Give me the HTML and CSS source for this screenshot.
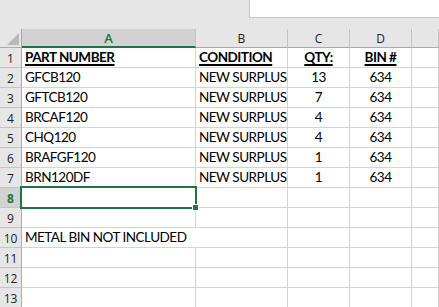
FILE: index.html
```html
<!DOCTYPE html>
<html>
<head>
<meta charset="utf-8">
<link rel="stylesheet" href="styles.css">
</head>
<body>
<div class="top"><div class="fbar"></div></div>
<div class="sheet">
  <div class="ch corner"><svg width="22" height="19" viewBox="0 0 22 19"><polygon points="7,16 19,16 19,4" fill="#b9b9b9"/></svg></div>
  <div class="ch sel">A</div>
  <div class="ch">B</div>
  <div class="ch">C</div>
  <div class="ch">D</div>
  <div class="ch"></div>

  <div class="rh">1</div><div class="c hd">PART NUMBER</div><div class="c hd">CONDITION</div><div class="c hd mid">QTY:</div><div class="c hd mid">BIN #</div><div class="c"></div>
  <div class="rh">2</div><div class="c">GFCB120</div><div class="c">NEW SURPLUS</div><div class="c mid">13</div><div class="c mid">634</div><div class="c"></div>
  <div class="rh">3</div><div class="c">GFTCB120</div><div class="c">NEW SURPLUS</div><div class="c mid">7</div><div class="c mid">634</div><div class="c"></div>
  <div class="rh">4</div><div class="c">BRCAF120</div><div class="c">NEW SURPLUS</div><div class="c mid">4</div><div class="c mid">634</div><div class="c"></div>
  <div class="rh">5</div><div class="c">CHQ120</div><div class="c">NEW SURPLUS</div><div class="c mid">4</div><div class="c mid">634</div><div class="c"></div>
  <div class="rh">6</div><div class="c">BRAFGF120</div><div class="c">NEW SURPLUS</div><div class="c mid">1</div><div class="c mid">634</div><div class="c"></div>
  <div class="rh">7</div><div class="c">BRN120DF</div><div class="c">NEW SURPLUS</div><div class="c mid">1</div><div class="c mid">634</div><div class="c"></div>
  <div class="rh rsel">8</div><div class="c active"><span class="handle"></span></div><div class="c"></div><div class="c"></div><div class="c"></div><div class="c"></div>
  <div class="rh">9</div><div class="c"></div><div class="c"></div><div class="c"></div><div class="c"></div><div class="c"></div>
  <div class="rh">10</div><div class="c over">METAL BIN NOT INCLUDED</div><div class="c"></div><div class="c"></div><div class="c"></div><div class="c"></div>
  <div class="rh">11</div><div class="c"></div><div class="c"></div><div class="c"></div><div class="c"></div><div class="c"></div>
  <div class="rh">12</div><div class="c"></div><div class="c"></div><div class="c"></div><div class="c"></div><div class="c"></div>
  <div class="rh">13</div><div class="c"></div><div class="c"></div><div class="c"></div><div class="c"></div><div class="c"></div>
</div>
</body>
</html>
```

FILE: styles.css
```css
html, body {
  margin: 0;
  padding: 0;
  background: #e6e6e6;
  overflow: hidden;
}
.top {
  height: 29px;
  position: relative;
}
.fbar {
  position: absolute;
  left: 249px;
  right: 0;
  top: 0;
  height: 17px;
  background: #fff;
  border-left: 1px solid #c6c6c6;
  border-bottom: 1px solid #c6c6c6;
}
.sheet {
  display: grid;
  grid-template-columns: 22px 174px 92px 62px 62px 1fr;
  grid-template-rows: 19px;
  grid-auto-rows: 20px;
  background: #fff;
  position: relative;
}
.ch {
  box-sizing: border-box;
  background: #e6e6e6;
  border-right: 1px solid #c4c4c4;
  border-bottom: 1px solid #ababab;
  font-family: "Open Sans", "Noto Sans", sans-serif;
  font-size: 12px;
  color: #222;
  display: flex;
  align-items: center;
  justify-content: center;
  padding-top: 1px;
}
.ch.corner {
  display: block;
  padding: 0;
  border-right-color: #ababab;
}
.ch.corner svg { display: block; }
.ch.sel {
  background: #d2d2d2;
  border-bottom: 2px solid #217346;
  color: #217346;
  font-size: 13px;
  font-weight: 600;
}
.rh {
  box-sizing: border-box;
  background: #e6e6e6;
  border-right: 1px solid #ababab;
  border-bottom: 1px solid #c4c4c4;
  font-family: "Open Sans", "Noto Sans", sans-serif;
  font-size: 12px;
  color: #222;
  display: flex;
  align-items: center;
  justify-content: center;
  padding-top: 1px;
}
.rh.rsel {
  background: #d2d2d2;
  color: #217346;
  font-weight: 700;
}
.c {
  box-sizing: border-box;
  border-right: 1px solid #d4d4d4;
  border-bottom: 1px solid #d4d4d4;
  font-family: "Lato", "Liberation Sans", sans-serif;
  font-size: 13.5px;
  letter-spacing: -0.5px;
  color: #000;
  display: flex;
  align-items: flex-end;
  padding: 0 3px 2px;
  white-space: nowrap;
  line-height: 16px;
}
.c.mid { justify-content: center; }
.c.hd {
  font-weight: 700;
  text-decoration: underline;
  text-decoration-thickness: 1.5px;
  text-underline-offset: 2px;
}
.c.over {
  overflow: visible;
  border-right-color: transparent;
  position: relative;
  z-index: 1;
}
.c.active {
  position: relative;
  box-shadow: 0 0 0 1px #217346;
  border: 1px solid #217346;
  margin: -1px 0 0 -1px;
  width: calc(100% + 1px);
  height: 21px;
}
.handle {
  position: absolute;
  right: -4px;
  bottom: -4px;
  width: 5px;
  height: 5px;
  background: #217346;
  border: 1px solid #fff;
}
```
